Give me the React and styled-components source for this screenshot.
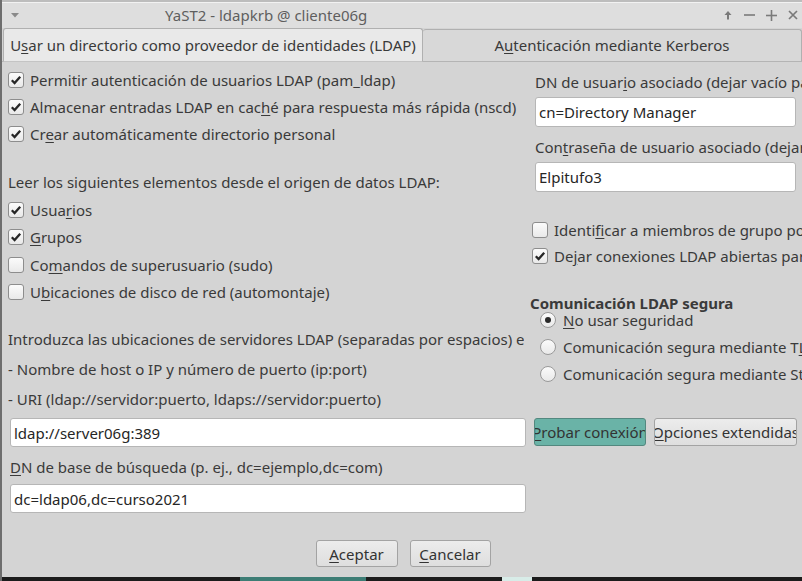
import React from 'react';
import styled, { createGlobalStyle } from 'styled-components';

const GlobalStyle = createGlobalStyle`
  html, body {
    margin: 0;
    padding: 0;
    width: 802px;
    height: 581px;
    overflow: hidden;
    background: #d4d4d4;
  }
  body {
    font-family: "Noto Sans", "Open Sans", sans-serif;
    font-size: 15px;
    color: #3a3a3a;
  }
`;

function CheckMark() {
  return (
    <svg width="12" height="12" viewBox="0 0 12 12">
      <path d="M1.8 6.2 L4.6 9 L10.2 2.8" fill="none" stroke="#262626" strokeWidth="2.3" />
    </svg>
  );
}

function Check({ checked, children }) {
  return (
    <CheckRow>
      <Box>{checked && <CheckMark />}</Box>
      <span>{children}</span>
    </CheckRow>
  );
}

function Radio({ checked, children }) {
  return (
    <RadioRow>
      <Circle>{checked && <Dot />}</Circle>
      <span>{children}</span>
    </RadioRow>
  );
}

function App() {
  return (
    <Window>
      <GlobalStyle />
      <TitleBar>
        <svg width="8" height="5" viewBox="0 0 8 5">
          <path d="M0 0 L8 0 L4 4.5 Z" fill="#8a8a8a" />
        </svg>
        <Title>YaST2 - ldapkrb @ cliente06g</Title>
        <WinButtons>
          <svg width="10" height="10" viewBox="0 0 10 10">
            <path d="M5 1 L8.5 5 L6 5 L6 9.5 L4 9.5 L4 5 L1.5 5 Z" fill="#7a7a7a" />
          </svg>
          <svg width="11" height="10" viewBox="0 0 11 10">
            <rect x="0" y="4.2" width="11" height="1.6" fill="#7a7a7a" />
          </svg>
          <svg width="11" height="11" viewBox="0 0 11 11">
            <rect x="0" y="4.7" width="11" height="1.6" fill="#7a7a7a" />
            <rect x="4.7" y="0" width="1.6" height="11" fill="#7a7a7a" />
          </svg>
          <svg width="10" height="10" viewBox="0 0 10 10">
            <path d="M1 1 L9 9 M9 1 L1 9" stroke="#7a7a7a" strokeWidth="1.7" />
          </svg>
        </WinButtons>
      </TitleBar>

      <TabBar>
        <Tab active>
          U<U>s</U>ar un directorio como proveedor de identidades (LDAP)
        </Tab>
        <Tab>
          A<U>u</U>tenticación mediante Kerberos
        </Tab>
      </TabBar>

      <Content>
        <LeftColumn>
          <Check checked>Permitir autenticación de usuarios LDAP (pam_ldap)</Check>
          <Check checked>
            Almacenar entradas LDAP en cac<U>h</U>é para respuesta más rápida (nscd)
          </Check>
          <Check checked>
            Cr<U>e</U>ar automáticamente directorio personal
          </Check>

          <Label top={22}>Leer los siguientes elementos desde el origen de datos LDAP:</Label>
          <Group>
            <Check checked>
              Usua<U>r</U>ios
            </Check>
            <Check checked>
              <U>G</U>rupos
            </Check>
            <Check>
              Co<U>m</U>andos de superusuario (sudo)
            </Check>
            <Check>
              U<U>b</U>icaciones de disco de red (automontaje)
            </Check>
          </Group>

          <HintLine top={18}>
            Introduzca las ubicaciones de servidores LDAP (separadas por espacios) en cualquiera de los formatos:
          </HintLine>
          <HintLine>- Nombre de host o IP y número de puerto (ip:port)</HintLine>
          <HintLine>- URI (ldap://servidor:puerto, ldaps://servidor:puerto)</HintLine>
        </LeftColumn>

        <RightColumn>
          <FieldLabel top={4}>
            DN de usuar<U>i</U>o asociado (dejar vacío para usar enlace anónimo)
          </FieldLabel>
          <Input wide defaultValue="cn=Directory Manager" />
          <FieldLabel top={8}>
            Con<U>t</U>raseña de usuario asociado (dejar vacío para usar enlace anónimo)
          </FieldLabel>
          <Input wide defaultValue="Elpitufo3" />

          <RightChecks>
            <Check>
              Identi<U>f</U>icar a miembros de grupo por DN
            </Check>
            <Check checked>
              De<U>j</U>ar conexiones LDAP abiertas para consultas consecutivas
            </Check>
          </RightChecks>

          <Heading>Comunicación LDAP segura</Heading>
          <RadioGroup>
            <Radio checked>
              <U>N</U>o usar seguridad
            </Radio>
            <Radio>
              Comunicación segura mediante T<U>L</U>S
            </Radio>
            <Radio>
              Comunicación segura mediante StartTLS
            </Radio>
          </RadioGroup>
        </RightColumn>

        <Input defaultValue="ldap://server06g:389" />
        <ButtonPair>
          <PushButton accent width={112}>
            <U>P</U>robar conexión
          </PushButton>
          <PushButton width={143}>
            <U>O</U>pciones extendidas
          </PushButton>
        </ButtonPair>

        <BaseField>
          <Label>
            <U>D</U>N de base de búsqueda (p. ej., dc=ejemplo,dc=com)
          </Label>
          <Input defaultValue="dc=ldap06,dc=curso2021" />
        </BaseField>
      </Content>

      <Footer>
        <PushButton width={82} tall>
          <U>A</U>ceptar
        </PushButton>
        <PushButton width={81} tall>
          <U>C</U>ancelar
        </PushButton>
      </Footer>

      <Taskbar>
        <TaskItem />
        <TrayBox />
      </Taskbar>
    </Window>
  );
}

const Window = styled.div`
  width: 802px;
  height: 581px;
  box-sizing: border-box;
  border-left: 2px solid #6e6e6e;
  display: flex;
  flex-direction: column;
  overflow: hidden;
  background: #d4d4d4;
`;

const TitleBar = styled.div`
  height: 28px;
  box-sizing: border-box;
  border-top: 2px solid #bdbdbd;
  box-shadow: inset 0 1px 0 #f2f2f2;
  background: #dedede;
  display: flex;
  align-items: center;
  padding-left: 9px;
`;

const Title = styled.div`
  margin-left: 146px;
  color: #5e5e5e;
  font-size: 15px;
`;

const WinButtons = styled.div`
  margin-left: auto;
  display: flex;
  align-items: center;
  gap: 11px;
  padding-right: 4px;
`;

const TabBar = styled.div`
  height: 34px;
  display: flex;
  align-items: flex-end;
  padding-left: 1px;
  border-bottom: 1px solid #b4b4b4;
  box-sizing: border-box;
`;

const Tab = styled.div`
  box-sizing: border-box;
  height: ${(p) => (p.active ? '34px' : '32px')};
  width: ${(p) => (p.active ? '421px' : '380px')};
  margin-bottom: ${(p) => (p.active ? '-1px' : '0')};
  display: flex;
  align-items: center;
  justify-content: center;
  white-space: nowrap;
  background: ${(p) => (p.active ? '#e9e9e9' : '#d8d8d8')};
  border: 1px solid #b0b0b0;
  border-bottom: ${(p) => (p.active ? '1px solid #c4c4c4' : 'none')};
  border-left: ${(p) => (p.active ? '1px solid #b0b0b0' : 'none')};
  border-radius: 3px 3px 0 0;
  color: #3a3a3a;
  padding-bottom: 1px;
`;

const U = styled.span`
  text-decoration: underline;
  text-underline-offset: 2px;
  text-decoration-thickness: 1px;
`;

const Content = styled.div`
  display: grid;
  grid-template-columns: 516px 300px;
  column-gap: 8px;
  padding: 4px 0 0 6px;
  align-items: start;
`;

const LeftColumn = styled.div`
  display: flex;
  flex-direction: column;
  white-space: nowrap;
  overflow: hidden;
`;

const RightColumn = styled.div`
  display: flex;
  flex-direction: column;
  white-space: nowrap;
`;

const CheckRow = styled.div`
  height: 27px;
  display: flex;
  align-items: center;
  gap: 6px;
  white-space: nowrap;
`;

const Group = styled.div`
  display: flex;
  flex-direction: column;

  ${CheckRow} {
    height: 27.5px;
  }
`;

const Box = styled.span`
  flex: none;
  width: 16px;
  height: 16px;
  box-sizing: border-box;
  border: 1px solid #8d8d8d;
  border-radius: 3px;
  background: linear-gradient(#fbfbfb, #e9e9e9);
  display: flex;
  align-items: center;
  justify-content: center;
`;

const Label = styled.div`
  height: 27px;
  line-height: 27px;
  margin-top: ${(p) => p.top || 0}px;
  white-space: nowrap;
`;

const HintLine = styled.div`
  height: 30px;
  line-height: 30px;
  margin-top: ${(p) => p.top || 0}px;
  white-space: nowrap;
  overflow: hidden;
`;

const FieldLabel = styled.div`
  height: 24px;
  line-height: 24px;
  margin: ${(p) => p.top || 0}px 0 3px 3px;
`;

const Input = styled.input`
  box-sizing: border-box;
  width: ${(p) => (p.wide ? '261px' : '516px')};
  height: ${(p) => (p.wide ? '30px' : '29px')};
  margin-left: ${(p) => (p.wide ? '3px' : '2px')};
  margin-top: ${(p) => (p.wide ? '0' : '4px')};
  padding: 0 3px;
  border: 1px solid #b6b6b6;
  border-radius: 3px;
  background: #ffffff;
  font-family: "Noto Sans", "Open Sans", sans-serif;
  font-size: 15px;
  color: #262626;
  outline: none;
`;

const RightChecks = styled.div`
  margin-top: 25px;
  display: flex;
  flex-direction: column;

  ${CheckRow} {
    height: 26px;
  }
`;

const Heading = styled.div`
  margin-top: 25px;
  margin-left: -2px;
  height: 18px;
  line-height: 18px;
  font-weight: bold;
`;

const RadioGroup = styled.div`
  margin-top: -6px;
  margin-left: 8px;
  display: flex;
  flex-direction: column;
`;

const RadioRow = styled.div`
  height: 27px;
  display: flex;
  align-items: center;
  gap: 7px;
`;

const Circle = styled.span`
  flex: none;
  width: 16px;
  height: 16px;
  box-sizing: border-box;
  border: 1px solid #9a9a9a;
  border-radius: 50%;
  background: linear-gradient(#fbfbfb, #e9e9e9);
  display: flex;
  align-items: center;
  justify-content: center;
`;

const Dot = styled.span`
  width: 6px;
  height: 6px;
  border-radius: 50%;
  background: #2a2a2a;
`;

const ButtonPair = styled.div`
  display: flex;
  gap: 8px;
  margin-top: 4px;
  margin-left: 2px;
`;

const PushButton = styled.div`
  box-sizing: border-box;
  width: ${(p) => p.width}px;
  height: ${(p) => (p.tall ? '27px' : '28px')};
  display: flex;
  align-items: center;
  justify-content: center;
  white-space: nowrap;
  overflow: hidden;
  border: 1px solid ${(p) => (p.accent ? '#53887f' : '#a3a3a3')};
  border-radius: 3px;
  background: ${(p) => (p.accent ? '#6ab3a7' : 'linear-gradient(#ececec, #dedede)')};
  color: #333;
  font-size: 15px;
`;

const BaseField = styled.div`
  grid-column: 1;
  display: flex;
  flex-direction: column;
  margin-top: 7px;

  ${Label} {
    margin-left: 2px;
  }

  ${Input} {
    margin-top: 3px;
  }
`;

const Footer = styled.div`
  margin-top: 27px;
  display: flex;
  justify-content: center;
  gap: 12px;
  padding-left: 2px;
`;

const Taskbar = styled.div`
  margin-top: auto;
  height: 4px;
  margin-left: -2px;
  background: #1c1c1c;
  display: flex;
`;

const TaskItem = styled.div`
  margin-left: 240px;
  width: 126px;
  background: #3d7d75;
`;

const TrayBox = styled.div`
  margin-left: 136px;
  width: 30px;
  background: #d8ece8;
`;

export default App;
